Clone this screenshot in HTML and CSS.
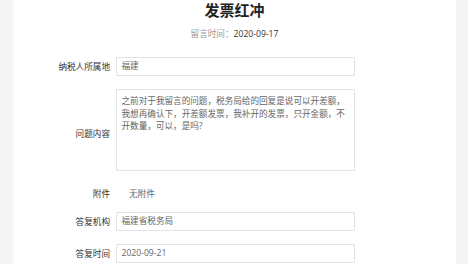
FILE: index.html
```html
<!DOCTYPE html>
<html lang="zh-CN">
<head>
<meta charset="utf-8">
<title>发票红冲</title>
<link rel="stylesheet" href="styles.css">
</head>
<body>
<div class="card">
  <h1 class="title">发票红冲</h1>
  <div class="meta"><span class="meta-key">留言时间：</span><span class="meta-val">2020-09-17</span></div>
  <div class="form">
    <div class="row">
      <div class="label">纳税人所属地</div>
      <div class="field">福建</div>
    </div>
    <div class="row">
      <div class="label label-area">问题内容</div>
      <div class="field area">之前对于我留言的问题，税务局给的回复是说可以开差额，<br>我想再确认下，开差额发票，我补开的发票，只开金额，不<br>开数量，可以，是吗?</div>
    </div>
    <div class="row row-attach">
      <div class="label">附件</div>
      <div class="plain">无附件</div>
    </div>
    <div class="row">
      <div class="label">答复机构</div>
      <div class="field">福建省税务局</div>
    </div>
    <div class="row">
      <div class="label">答复时间</div>
      <div class="field">2020-09-21</div>
    </div>
  </div>
</div>
</body>
</html>
```

FILE: styles.css
```css
html, body {
  margin: 0;
  padding: 0;
}
body {
  background: #f4f5f7;
  font-family: "Open Sans", "Noto Sans CJK SC", sans-serif;
  font-size: 8.6px;
  color: #333;
  height: 264px;
  overflow: hidden;
}
.card {
  margin-left: 13px;
  width: 443px;
  height: 264px;
  background: #fff;
  overflow: hidden;
}
.title {
  margin: 0;
  text-align: center;
  font-size: 15px;
  font-weight: 700;
  line-height: 20px;
  color: #222;
}
.meta {
  margin-top: 7px;
  text-align: center;
  line-height: 14px;
}
.meta-key {
  color: #999;
}
.meta-val {
  color: #333;
}
.form {
  margin-top: 16.3px;
}
.row {
  display: grid;
  grid-template-columns: 97px 239px;
  column-gap: 6px;
  align-items: center;
  margin-bottom: 12.8px;
}
.row-attach {
  margin-bottom: 9px;
  height: 19px;
}
.label {
  text-align: right;
  color: #333;
}
.label-area {
  padding-top: 6px;
}
.field {
  box-sizing: border-box;
  height: 19px;
  border: 1px solid #e3e3e3;
  border-radius: 1px;
  padding: 0 4.5px;
  line-height: 17px;
  color: #666;
  white-space: nowrap;
}
.area {
  height: 82px;
  padding: 5px 4.5px;
  line-height: 12.6px;
}
.plain {
  padding-left: 13px;
  color: #666;
}
```
